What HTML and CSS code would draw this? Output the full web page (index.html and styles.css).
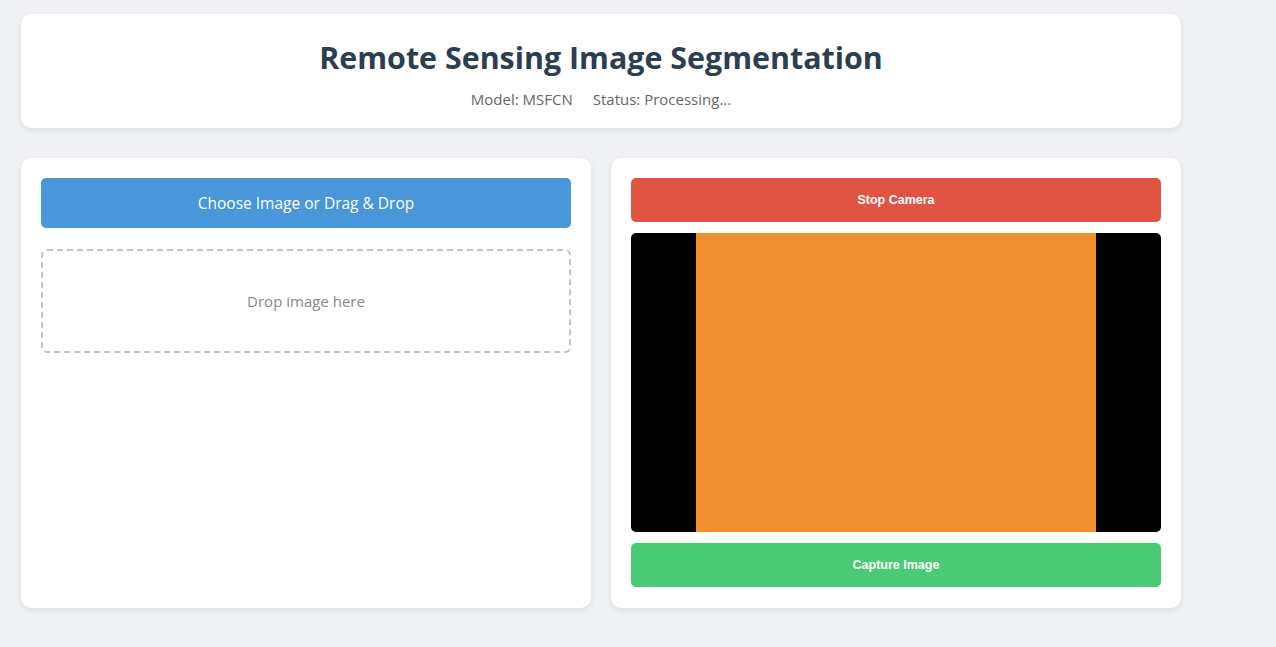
FILE: index.html
```html
<!DOCTYPE html>
<html lang="en">
<head>
<meta charset="utf-8">
<title>Remote Sensing Image Segmentation</title>
<link rel="stylesheet" href="styles.css">
</head>
<body>
<div class="app">
  <header class="header card">
    <h1 class="title">Remote Sensing Image Segmentation</h1>
    <div class="meta">
      <span>Model: MSFCN</span>
      <span>Status: Processing...</span>
    </div>
  </header>
  <main class="panels">
    <section class="card panel">
      <button class="btn btn-upload">Choose Image or Drag &amp; Drop</button>
      <div class="dropzone">Drop image here</div>
    </section>
    <section class="card panel">
      <button class="btn btn-small btn-stop">Stop Camera</button>
      <div class="video"><div class="feed"></div></div>
      <button class="btn btn-small btn-capture">Capture Image</button>
    </section>
  </main>
</div>
</body>
</html>
```
FILE: styles.css
```css
* { box-sizing: border-box; }
html, body { margin: 0; padding: 0; }
body {
  background: #f0f1f5;
  font-family: "Open Sans", "Noto Sans", sans-serif;
  color: #2c3e50;
  height: 647px;
  overflow: hidden;
}
.app {
  width: 1160px;
  margin-left: 21px;
  padding-top: 14px;
}
.card {
  background: #fff;
  border-radius: 10px;
  box-shadow: 0 2px 6px rgba(0, 0, 0, 0.09);
}
.header {
  height: 114px;
  padding-top: 22px;
  text-align: center;
}
.title {
  margin: 0;
  font-size: 30.4px;
  line-height: 44px;
  font-weight: 700;
  color: #2c3e50;
}
.meta {
  margin-top: 9px;
  display: flex;
  justify-content: center;
  gap: 20px;
  font-size: 15px;
  line-height: 20px;
  color: #666;
}
.panels {
  margin-top: 30px;
  display: grid;
  grid-template-columns: 570px 570px;
  gap: 20px;
}
.panel {
  height: 450px;
  padding: 20px;
  display: flex;
  flex-direction: column;
}
.btn {
  border: none;
  border-radius: 5px;
  color: #fff;
  width: 100%;
  flex: none;
  cursor: pointer;
}
.btn-upload {
  height: 50px;
  background: #4a96da;
  font-family: "Open Sans", "Noto Sans", sans-serif;
  font-size: 15.5px;
}
.dropzone {
  margin-top: 21px;
  height: 104px;
  flex: none;
  border: 2px dashed #c2c2c2;
  border-radius: 6px;
  display: flex;
  align-items: center;
  justify-content: center;
  font-size: 15px;
  color: #888;
}
.btn-small {
  height: 44px;
  font-family: "Liberation Sans", Arial, sans-serif;
  font-size: 12.5px;
  font-weight: 700;
}
.btn-stop { background: #e05444; }
.btn-capture { background: #4bca75; margin-top: 11px; }
.video {
  margin-top: 11px;
  height: 299px;
  flex: none;
  background: #000;
  border-radius: 5px;
  display: flex;
  justify-content: center;
  overflow: hidden;
}
.feed {
  width: 400px;
  background: #f09031;
}
```
